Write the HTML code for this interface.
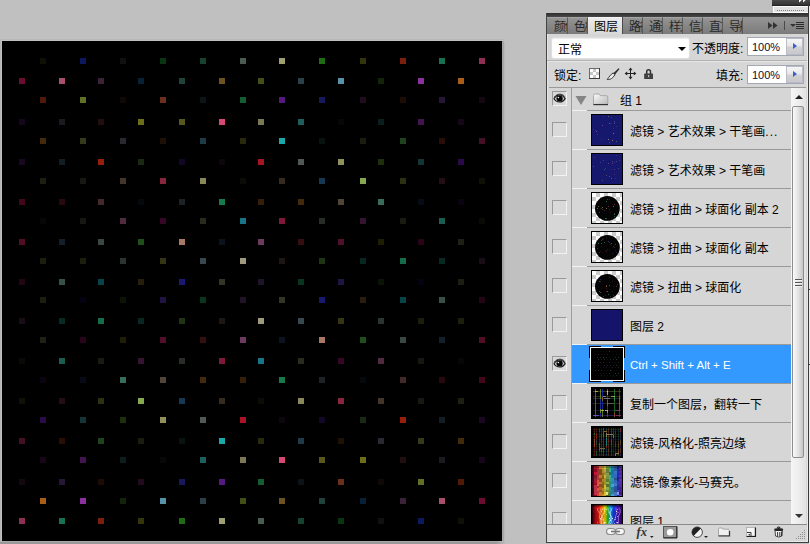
<!DOCTYPE html>
<html lang="zh-CN"><head><meta charset="utf-8"><title>图层</title>
<style>
html,body{margin:0;padding:0;}
html{background:#c0c0c0;}
body{width:810px;height:544px;overflow:hidden;background:#c0c0c0;position:relative;
 font-family:"Liberation Sans","Noto Sans CJK SC","WenQuanYi Zen Hei",sans-serif;font-size:12px;color:#000;}
.abs{position:absolute;}
#canvas{position:absolute;left:2px;top:41px;width:500px;height:500px;background:#000;
 }
#canvas svg{display:block;}
/* dock bits top right */
#dockbar{position:absolute;left:772px;top:0;width:38px;height:5px;background:linear-gradient(#4a4a4a,#333);border-bottom:1px solid #222;}
#dockgrip{position:absolute;left:773px;top:6px;width:35px;height:7px;background:#e0e0e0;box-sizing:border-box;border:1px solid #fbfbfb;border-right:none;}
#rightedge{position:absolute;left:808px;top:5px;width:1px;height:538px;background:#3a3a3a;}
#rightedge2{position:absolute;left:809px;top:6px;width:1px;height:538px;background:#ececec;}
.tick{position:absolute;left:809px;width:1px;height:1px;background:#333;}
/* panel */
#panel{position:absolute;left:546px;top:13px;width:262px;height:530px;background:#d6d6d6;}
#ptop{position:absolute;left:0;top:0;width:262px;height:4px;background:linear-gradient(#2c2c2c,#484848);}
#pleft{position:absolute;left:0;top:0;width:1px;height:530px;background:#444;}
#pleft2{position:absolute;left:1px;top:21px;width:1px;height:507px;background:#e6e6e6;}
#pbottom{position:absolute;left:0;top:529px;width:263px;height:1px;background:#3e3e3e;}
#pbottom2{position:absolute;left:1px;top:528px;width:261px;height:1px;background:#e8e8e8;}
#pright2{position:absolute;left:261px;top:21px;width:1px;height:507px;background:#e8e8e8;}
#tabs{position:absolute;left:1px;top:4px;width:261px;height:17px;background:linear-gradient(#959595,#7b7b7b);overflow:hidden;}
.tab{position:absolute;top:0;height:17px;overflow:hidden;white-space:nowrap;line-height:17px;font-size:12px;
 box-sizing:border-box;border-right:1px solid #5a5a5a;border-top:1px solid #a4a4a4;padding-left:6px;color:#111;
 background:linear-gradient(#939393,#7a7a7a);}
.tab span{display:block;margin-top:1px;letter-spacing:-1.500px;opacity:.82;}
.tab.act span{letter-spacing:0;opacity:1;}
.tab.act{background:linear-gradient(#ececec,#d8d8d8);border-right:none;border-top:1px solid #f4f4f4;padding-left:6px;color:#000;}
#tabsep{position:absolute;top:0;width:1px;height:17px;background:#4a4a4a;}
/* options rows */
#blend{position:absolute;left:6px;top:25px;width:137px;height:20px;background:#fff;border-radius:2px;box-shadow:0 0 0 1px #dedede;border-top:1px solid #ececec;box-sizing:border-box;}
#blend span{position:absolute;left:6px;top:4px;font-size:12px;line-height:14px;}
#blend i{position:absolute;left:126px;top:8px;width:0;height:0;border-left:4px solid transparent;border-right:4px solid transparent;border-top:4px solid #000;}
.lbl{position:absolute;font-size:12px;line-height:14px;white-space:nowrap;}
.num{position:absolute;width:57px;height:19px;background:#b9bcc6;box-sizing:border-box;border:1px solid #a4a8b2;}
.num .in{position:absolute;left:0;top:0;width:38px;height:17px;background:#fff;font-size:11px;line-height:19px;color:#0c0c2c;text-indent:4px;}
.num .bt{position:absolute;left:39px;top:1px;width:15px;height:15px;background:linear-gradient(#f6f6f6,#e6e6e6 48%,#d2d2d4 52%,#c8c8cc);}
.num .bt i{position:absolute;left:6px;top:4px;width:0;height:0;border-top:3.500px solid transparent;border-bottom:3.500px solid transparent;border-left:4px solid #3c5cd0;}
.hline{position:absolute;height:1px;}
/* list */
#list{position:absolute;left:1px;top:74px;width:261px;height:437px;overflow:hidden;}
#vline{position:absolute;left:24px;top:1px;width:1px;height:436px;background:#9c9c9c;}
.eye{position:absolute;left:5px;width:15px;height:15px;box-sizing:border-box;border:1px solid;border-color:#9a9a9a #f2f2f2 #f2f2f2 #9a9a9a;background:#d9d9d9;}
.row{position:absolute;left:25px;width:219px;height:39px;}
.row .s1{position:absolute;left:0;top:0;width:15px;height:1px;background:#f2f2f2;}
.row .s2{position:absolute;left:15px;top:0;width:204px;height:1px;background:#9a9a9a;}
.row .th{position:absolute;left:19px;top:4px;width:32px;height:32px;background:#000;overflow:hidden;}
.row .th svg{display:block;}
.row .nm{position:absolute;left:58px;top:15px;font-size:12px;line-height:14px;white-space:nowrap;color:#000;}
.row.sel{background:#3399ff;}
.row.sel .nm{color:#fff;}
/* scrollbar */
#sb{position:absolute;left:245px;top:75px;width:15px;height:436px;background:linear-gradient(90deg,#f6f6f6,#ededed 50%,#e2e2e2);}
#thumb{position:absolute;left:1px;top:18px;width:12px;height:352px;box-sizing:border-box;border:1px solid #8e8e8e;border-radius:2px;
 background:linear-gradient(90deg,#fafafa,#e6e6e6 45%,#c6c6c6);}
.grip{position:absolute;left:2px;width:7px;height:1px;background:#555;box-shadow:0 1px 0 #f4f4f4;}
.arr{position:absolute;left:4px;width:0;height:0;border-left:4px solid transparent;border-right:4px solid transparent;}
/* bottom toolbar */
#tb{position:absolute;left:1px;top:511px;width:261px;height:17px;background:#d6d6d6;border-top:1px solid #8a8a8a;box-sizing:border-box;}
#tb svg{position:absolute;top:0;left:0;}
.row.sel .bg{position:absolute;left:0;top:1px;width:219px;height:38px;background:#3399ff;}
.row.sel{background:none;}
.row.sel .nm{font-size:11.500px;top:14px;}
.dd{letter-spacing:1px;}
.sh{position:absolute;}

</style></head>
<body>
<div class="sh" style="left:0;top:39px;width:504px;height:1px;background:#b7b7b7"></div>
<div class="sh" style="left:0;top:40px;width:1px;height:504px;background:#b5b5b5"></div>
<div class="sh" style="left:502px;top:41px;width:2px;height:500px;background:#a6a6a6"></div>
<div class="sh" style="left:504px;top:42px;width:1px;height:498px;background:#b8b8b8"></div>
<div class="sh" style="left:1px;top:541px;width:504px;height:1px;background:linear-gradient(90deg,#a8a8a8 0,#a8a8a8 496px,#bcbcbc 504px)"></div>
<div class="sh" style="left:0;top:542px;width:506px;height:2px;background:linear-gradient(90deg,#999 0,#999 496px,#c0c0c0 506px)"></div>
<div id="canvas"><svg width="500" height="500" viewBox="0 0 500 500" shape-rendering="crispEdges"><rect width="500" height="500" fill="#000"/><rect x="38" y="17" width="6" height="6" fill="#0d1105"/><rect x="78" y="17" width="6" height="6" fill="#0e185d"/><rect x="118" y="17" width="6" height="6" fill="#101011"/><rect x="158" y="17" width="6" height="6" fill="#0a3512"/><rect x="198" y="17" width="6" height="6" fill="#16422f"/><rect x="238" y="17" width="6" height="6" fill="#495c4f"/><rect x="277" y="17" width="6" height="6" fill="#9f9f71"/><rect x="317" y="17" width="6" height="6" fill="#206c15"/><rect x="358" y="17" width="6" height="6" fill="#35350b"/><rect x="398" y="17" width="6" height="6" fill="#7a1f0c"/><rect x="437" y="17" width="6" height="6" fill="#197153"/><rect x="477" y="17" width="6" height="6" fill="#902f55"/><rect x="17" y="37" width="6" height="6" fill="#6c0c32"/><rect x="57" y="37" width="6" height="6" fill="#a8506b"/><rect x="96" y="37" width="6" height="6" fill="#3a2336"/><rect x="136" y="37" width="6" height="6" fill="#082137"/><rect x="177" y="37" width="6" height="6" fill="#1f423b"/><rect x="217" y="37" width="6" height="6" fill="#6c531f"/><rect x="256" y="37" width="6" height="6" fill="#435015"/><rect x="296" y="37" width="6" height="6" fill="#2b4147"/><rect x="336" y="37" width="6" height="6" fill="#5793a8"/><rect x="376" y="37" width="6" height="6" fill="#13240b"/><rect x="416" y="37" width="6" height="6" fill="#8b319f"/><rect x="456" y="37" width="6" height="6" fill="#a85e17"/><rect x="38" y="56" width="6" height="6" fill="#501b06"/><rect x="78" y="56" width="6" height="6" fill="#607125"/><rect x="118" y="56" width="6" height="6" fill="#100806"/><rect x="158" y="56" width="6" height="6" fill="#6c2f1c"/><rect x="198" y="56" width="6" height="6" fill="#0b1316"/><rect x="238" y="56" width="6" height="6" fill="#145d31"/><rect x="277" y="56" width="6" height="6" fill="#551980"/><rect x="317" y="56" width="6" height="6" fill="#18185d"/><rect x="358" y="56" width="6" height="6" fill="#200c1c"/><rect x="398" y="56" width="6" height="6" fill="#1d0b05"/><rect x="437" y="56" width="6" height="6" fill="#251735"/><rect x="477" y="56" width="6" height="6" fill="#130810"/><rect x="17" y="78" width="6" height="6" fill="#16061b"/><rect x="57" y="78" width="6" height="6" fill="#1c1921"/><rect x="96" y="78" width="6" height="6" fill="#210e0e"/><rect x="136" y="78" width="6" height="6" fill="#6c6e19"/><rect x="177" y="78" width="6" height="6" fill="#58581e"/><rect x="217" y="78" width="6" height="6" fill="#d64972"/><rect x="256" y="78" width="6" height="6" fill="#7a7954"/><rect x="296" y="78" width="6" height="6" fill="#205d5d"/><rect x="336" y="78" width="6" height="6" fill="#060805"/><rect x="376" y="78" width="6" height="6" fill="#0b1d1d"/><rect x="416" y="78" width="6" height="6" fill="#431550"/><rect x="456" y="78" width="6" height="6" fill="#160618"/><rect x="38" y="97" width="6" height="6" fill="#422a0b"/><rect x="78" y="97" width="6" height="6" fill="#363a1a"/><rect x="118" y="97" width="6" height="6" fill="#292931"/><rect x="158" y="97" width="6" height="6" fill="#1d1005"/><rect x="198" y="97" width="6" height="6" fill="#1f3b47"/><rect x="238" y="97" width="6" height="6" fill="#292a0b"/><rect x="277" y="97" width="6" height="6" fill="#1aa8a8"/><rect x="317" y="97" width="6" height="6" fill="#081310"/><rect x="358" y="97" width="6" height="6" fill="#1b1b10"/><rect x="398" y="97" width="6" height="6" fill="#1f421f"/><rect x="437" y="97" width="6" height="6" fill="#290e05"/><rect x="477" y="97" width="6" height="6" fill="#421126"/><rect x="17" y="118" width="6" height="6" fill="#1a0721"/><rect x="57" y="118" width="6" height="6" fill="#121d24"/><rect x="96" y="118" width="6" height="6" fill="#971d0d"/><rect x="136" y="118" width="6" height="6" fill="#192913"/><rect x="177" y="118" width="6" height="6" fill="#130727"/><rect x="217" y="118" width="6" height="6" fill="#0d060d"/><rect x="256" y="118" width="6" height="6" fill="#a81424"/><rect x="296" y="118" width="6" height="6" fill="#515858"/><rect x="336" y="118" width="6" height="6" fill="#90905b"/><rect x="376" y="118" width="6" height="6" fill="#1e2f0b"/><rect x="416" y="118" width="6" height="6" fill="#143535"/><rect x="456" y="118" width="6" height="6" fill="#2b0b47"/><rect x="38" y="137" width="6" height="6" fill="#1e1e13"/><rect x="78" y="137" width="6" height="6" fill="#181812"/><rect x="118" y="137" width="6" height="6" fill="#42362a"/><rect x="158" y="137" width="6" height="6" fill="#882640"/><rect x="198" y="137" width="6" height="6" fill="#88885a"/><rect x="238" y="137" width="6" height="6" fill="#0a0d05"/><rect x="277" y="137" width="6" height="6" fill="#352b1e"/><rect x="317" y="137" width="6" height="6" fill="#183750"/><rect x="358" y="137" width="6" height="6" fill="#86a850"/><rect x="398" y="137" width="6" height="6" fill="#2b3111"/><rect x="437" y="137" width="6" height="6" fill="#240e16"/><rect x="477" y="137" width="6" height="6" fill="#101006"/><rect x="17" y="158" width="6" height="6" fill="#42081a"/><rect x="57" y="158" width="6" height="6" fill="#29080e"/><rect x="96" y="158" width="6" height="6" fill="#422a2a"/><rect x="136" y="158" width="6" height="6" fill="#06090c"/><rect x="177" y="158" width="6" height="6" fill="#1d2227"/><rect x="217" y="158" width="6" height="6" fill="#167a4c"/><rect x="256" y="158" width="6" height="6" fill="#351f08"/><rect x="296" y="158" width="6" height="6" fill="#422a0b"/><rect x="336" y="158" width="6" height="6" fill="#504536"/><rect x="376" y="158" width="6" height="6" fill="#3a6c5e"/><rect x="416" y="158" width="6" height="6" fill="#060b16"/><rect x="456" y="158" width="6" height="6" fill="#0a0411"/><rect x="38" y="177" width="6" height="6" fill="#080509"/><rect x="78" y="177" width="6" height="6" fill="#161711"/><rect x="118" y="177" width="6" height="6" fill="#502b3f"/><rect x="158" y="177" width="6" height="6" fill="#350725"/><rect x="198" y="177" width="6" height="6" fill="#2a2a1f"/><rect x="238" y="177" width="6" height="6" fill="#197488"/><rect x="277" y="177" width="6" height="6" fill="#801939"/><rect x="317" y="177" width="6" height="6" fill="#292d28"/><rect x="358" y="177" width="6" height="6" fill="#351431"/><rect x="398" y="177" width="6" height="6" fill="#191b13"/><rect x="437" y="177" width="6" height="6" fill="#1b5d50"/><rect x="477" y="177" width="6" height="6" fill="#080a06"/><rect x="17" y="198" width="6" height="6" fill="#500f27"/><rect x="57" y="198" width="6" height="6" fill="#131f2a"/><rect x="96" y="198" width="6" height="6" fill="#3b4741"/><rect x="136" y="198" width="6" height="6" fill="#1f501b"/><rect x="177" y="198" width="6" height="6" fill="#a87864"/><rect x="217" y="198" width="6" height="6" fill="#0d131e"/><rect x="256" y="198" width="6" height="6" fill="#6c3a5f"/><rect x="296" y="198" width="6" height="6" fill="#350e11"/><rect x="336" y="198" width="6" height="6" fill="#500f2a"/><rect x="376" y="198" width="6" height="6" fill="#1e1e05"/><rect x="416" y="198" width="6" height="6" fill="#290419"/><rect x="456" y="198" width="6" height="6" fill="#1e2116"/><rect x="38" y="217" width="6" height="6" fill="#1e1e0d"/><rect x="78" y="217" width="6" height="6" fill="#1d1d0b"/><rect x="118" y="217" width="6" height="6" fill="#2b342e"/><rect x="158" y="217" width="6" height="6" fill="#353514"/><rect x="198" y="217" width="6" height="6" fill="#37484e"/><rect x="238" y="217" width="6" height="6" fill="#9f997e"/><rect x="277" y="217" width="6" height="6" fill="#1d1612"/><rect x="317" y="217" width="6" height="6" fill="#1e3514"/><rect x="358" y="217" width="6" height="6" fill="#082722"/><rect x="398" y="217" width="6" height="6" fill="#156c48"/><rect x="437" y="217" width="6" height="6" fill="#082a25"/><rect x="477" y="217" width="6" height="6" fill="#180d16"/><rect x="17" y="238" width="6" height="6" fill="#240513"/><rect x="57" y="238" width="6" height="6" fill="#375048"/><rect x="96" y="238" width="6" height="6" fill="#084347"/><rect x="136" y="238" width="6" height="6" fill="#291d0b"/><rect x="177" y="238" width="6" height="6" fill="#191971"/><rect x="217" y="238" width="6" height="6" fill="#353525"/><rect x="256" y="238" width="6" height="6" fill="#1f1327"/><rect x="296" y="238" width="6" height="6" fill="#08351d"/><rect x="336" y="238" width="6" height="6" fill="#201442"/><rect x="376" y="238" width="6" height="6" fill="#0a1305"/><rect x="416" y="238" width="6" height="6" fill="#040211"/><rect x="456" y="238" width="6" height="6" fill="#1e1e10"/><rect x="38" y="256" width="6" height="6" fill="#1e1e10"/><rect x="78" y="256" width="6" height="6" fill="#040211"/><rect x="118" y="256" width="6" height="6" fill="#0a1305"/><rect x="158" y="256" width="6" height="6" fill="#201442"/><rect x="198" y="256" width="6" height="6" fill="#08351d"/><rect x="238" y="256" width="6" height="6" fill="#1f1327"/><rect x="277" y="256" width="6" height="6" fill="#353525"/><rect x="317" y="256" width="6" height="6" fill="#191971"/><rect x="358" y="256" width="6" height="6" fill="#291d0b"/><rect x="398" y="256" width="6" height="6" fill="#084347"/><rect x="437" y="256" width="6" height="6" fill="#375048"/><rect x="477" y="256" width="6" height="6" fill="#240513"/><rect x="17" y="277" width="6" height="6" fill="#180d16"/><rect x="57" y="277" width="6" height="6" fill="#082a25"/><rect x="96" y="277" width="6" height="6" fill="#156c48"/><rect x="136" y="277" width="6" height="6" fill="#082722"/><rect x="177" y="277" width="6" height="6" fill="#1e3514"/><rect x="217" y="277" width="6" height="6" fill="#1d1612"/><rect x="256" y="277" width="6" height="6" fill="#9f997e"/><rect x="296" y="277" width="6" height="6" fill="#37484e"/><rect x="336" y="277" width="6" height="6" fill="#353514"/><rect x="376" y="277" width="6" height="6" fill="#2b342e"/><rect x="416" y="277" width="6" height="6" fill="#1d1d0b"/><rect x="456" y="277" width="6" height="6" fill="#1e1e0d"/><rect x="38" y="296" width="6" height="6" fill="#1e2116"/><rect x="78" y="296" width="6" height="6" fill="#290419"/><rect x="118" y="296" width="6" height="6" fill="#1e1e05"/><rect x="158" y="296" width="6" height="6" fill="#500f2a"/><rect x="198" y="296" width="6" height="6" fill="#350e11"/><rect x="238" y="296" width="6" height="6" fill="#6c3a5f"/><rect x="277" y="296" width="6" height="6" fill="#0d131e"/><rect x="317" y="296" width="6" height="6" fill="#a87864"/><rect x="358" y="296" width="6" height="6" fill="#1f501b"/><rect x="398" y="296" width="6" height="6" fill="#3b4741"/><rect x="437" y="296" width="6" height="6" fill="#131f2a"/><rect x="477" y="296" width="6" height="6" fill="#500f27"/><rect x="17" y="317" width="6" height="6" fill="#080a06"/><rect x="57" y="317" width="6" height="6" fill="#1b5d50"/><rect x="96" y="317" width="6" height="6" fill="#191b13"/><rect x="136" y="317" width="6" height="6" fill="#351431"/><rect x="177" y="317" width="6" height="6" fill="#292d28"/><rect x="217" y="317" width="6" height="6" fill="#801939"/><rect x="256" y="317" width="6" height="6" fill="#197488"/><rect x="296" y="317" width="6" height="6" fill="#2a2a1f"/><rect x="336" y="317" width="6" height="6" fill="#350725"/><rect x="376" y="317" width="6" height="6" fill="#502b3f"/><rect x="416" y="317" width="6" height="6" fill="#161711"/><rect x="456" y="317" width="6" height="6" fill="#080509"/><rect x="38" y="336" width="6" height="6" fill="#0a0411"/><rect x="78" y="336" width="6" height="6" fill="#060b16"/><rect x="118" y="336" width="6" height="6" fill="#3a6c5e"/><rect x="158" y="336" width="6" height="6" fill="#504536"/><rect x="198" y="336" width="6" height="6" fill="#422a0b"/><rect x="238" y="336" width="6" height="6" fill="#351f08"/><rect x="277" y="336" width="6" height="6" fill="#167a4c"/><rect x="317" y="336" width="6" height="6" fill="#1d2227"/><rect x="358" y="336" width="6" height="6" fill="#06090c"/><rect x="398" y="336" width="6" height="6" fill="#422a2a"/><rect x="437" y="336" width="6" height="6" fill="#29080e"/><rect x="477" y="336" width="6" height="6" fill="#42081a"/><rect x="17" y="357" width="6" height="6" fill="#101006"/><rect x="57" y="357" width="6" height="6" fill="#240e16"/><rect x="96" y="357" width="6" height="6" fill="#2b3111"/><rect x="136" y="357" width="6" height="6" fill="#86a850"/><rect x="177" y="357" width="6" height="6" fill="#183750"/><rect x="217" y="357" width="6" height="6" fill="#352b1e"/><rect x="256" y="357" width="6" height="6" fill="#0a0d05"/><rect x="296" y="357" width="6" height="6" fill="#88885a"/><rect x="336" y="357" width="6" height="6" fill="#882640"/><rect x="376" y="357" width="6" height="6" fill="#42362a"/><rect x="416" y="357" width="6" height="6" fill="#181812"/><rect x="456" y="357" width="6" height="6" fill="#1e1e13"/><rect x="38" y="376" width="6" height="6" fill="#2b0b47"/><rect x="78" y="376" width="6" height="6" fill="#143535"/><rect x="118" y="376" width="6" height="6" fill="#1e2f0b"/><rect x="158" y="376" width="6" height="6" fill="#90905b"/><rect x="198" y="376" width="6" height="6" fill="#515858"/><rect x="238" y="376" width="6" height="6" fill="#a81424"/><rect x="277" y="376" width="6" height="6" fill="#0d060d"/><rect x="317" y="376" width="6" height="6" fill="#130727"/><rect x="358" y="376" width="6" height="6" fill="#192913"/><rect x="398" y="376" width="6" height="6" fill="#971d0d"/><rect x="437" y="376" width="6" height="6" fill="#121d24"/><rect x="477" y="376" width="6" height="6" fill="#1a0721"/><rect x="17" y="397" width="6" height="6" fill="#421126"/><rect x="57" y="397" width="6" height="6" fill="#290e05"/><rect x="96" y="397" width="6" height="6" fill="#1f421f"/><rect x="136" y="397" width="6" height="6" fill="#1b1b10"/><rect x="177" y="397" width="6" height="6" fill="#081310"/><rect x="217" y="397" width="6" height="6" fill="#1aa8a8"/><rect x="256" y="397" width="6" height="6" fill="#292a0b"/><rect x="296" y="397" width="6" height="6" fill="#1f3b47"/><rect x="336" y="397" width="6" height="6" fill="#1d1005"/><rect x="376" y="397" width="6" height="6" fill="#292931"/><rect x="416" y="397" width="6" height="6" fill="#363a1a"/><rect x="456" y="397" width="6" height="6" fill="#422a0b"/><rect x="38" y="416" width="6" height="6" fill="#160618"/><rect x="78" y="416" width="6" height="6" fill="#431550"/><rect x="118" y="416" width="6" height="6" fill="#0b1d1d"/><rect x="158" y="416" width="6" height="6" fill="#060805"/><rect x="198" y="416" width="6" height="6" fill="#205d5d"/><rect x="238" y="416" width="6" height="6" fill="#7a7954"/><rect x="277" y="416" width="6" height="6" fill="#d64972"/><rect x="317" y="416" width="6" height="6" fill="#58581e"/><rect x="358" y="416" width="6" height="6" fill="#6c6e19"/><rect x="398" y="416" width="6" height="6" fill="#210e0e"/><rect x="437" y="416" width="6" height="6" fill="#1c1921"/><rect x="477" y="416" width="6" height="6" fill="#16061b"/><rect x="17" y="438" width="6" height="6" fill="#130810"/><rect x="57" y="438" width="6" height="6" fill="#251735"/><rect x="96" y="438" width="6" height="6" fill="#1d0b05"/><rect x="136" y="438" width="6" height="6" fill="#200c1c"/><rect x="177" y="438" width="6" height="6" fill="#18185d"/><rect x="217" y="438" width="6" height="6" fill="#551980"/><rect x="256" y="438" width="6" height="6" fill="#145d31"/><rect x="296" y="438" width="6" height="6" fill="#0b1316"/><rect x="336" y="438" width="6" height="6" fill="#6c2f1c"/><rect x="376" y="438" width="6" height="6" fill="#100806"/><rect x="416" y="438" width="6" height="6" fill="#607125"/><rect x="456" y="438" width="6" height="6" fill="#501b06"/><rect x="38" y="457" width="6" height="6" fill="#a85e17"/><rect x="78" y="457" width="6" height="6" fill="#8b319f"/><rect x="118" y="457" width="6" height="6" fill="#13240b"/><rect x="158" y="457" width="6" height="6" fill="#5793a8"/><rect x="198" y="457" width="6" height="6" fill="#2b4147"/><rect x="238" y="457" width="6" height="6" fill="#435015"/><rect x="277" y="457" width="6" height="6" fill="#6c531f"/><rect x="317" y="457" width="6" height="6" fill="#1f423b"/><rect x="358" y="457" width="6" height="6" fill="#082137"/><rect x="398" y="457" width="6" height="6" fill="#3a2336"/><rect x="437" y="457" width="6" height="6" fill="#a8506b"/><rect x="477" y="457" width="6" height="6" fill="#6c0c32"/><rect x="17" y="477" width="6" height="6" fill="#902f55"/><rect x="57" y="477" width="6" height="6" fill="#197153"/><rect x="96" y="477" width="6" height="6" fill="#7a1f0c"/><rect x="136" y="477" width="6" height="6" fill="#35350b"/><rect x="177" y="477" width="6" height="6" fill="#206c15"/><rect x="217" y="477" width="6" height="6" fill="#9f9f71"/><rect x="256" y="477" width="6" height="6" fill="#495c4f"/><rect x="296" y="477" width="6" height="6" fill="#16422f"/><rect x="336" y="477" width="6" height="6" fill="#0a3512"/><rect x="376" y="477" width="6" height="6" fill="#101011"/><rect x="416" y="477" width="6" height="6" fill="#0e185d"/><rect x="456" y="477" width="6" height="6" fill="#0d1105"/></svg></div>
<div id="dockbar"><svg class="abs" style="left:26px;top:0" width="10" height="4" viewBox="0 0 10 4"><path d="M1 0h2.800l-2.200 2.200h-.6zM5 0h2.700l-2.100 2.200h-.6z" fill="#f4f4f4"/></svg></div>
<div id="dockgrip"><svg class="abs" style="left:3px;top:2px" width="28" height="4" viewBox="0 0 28 4" shape-rendering="crispEdges"><path d="M0 1.500h1M2 1.500h1M4 1.500h1M6 1.500h1M8 1.500h1M10 1.500h1M12 1.500h1M14 1.500h1M16 1.500h1M18 1.500h1M20 1.500h1M22 1.500h1M24 1.500h1M26 1.500h1" stroke="#808080" stroke-width="1"/></svg></div>
<div id="rightedge"></div><div id="rightedge2"></div><div class="tick" style="top:289px"></div><div class="tick" style="top:364px"></div>
<div id="panel">
 <div id="ptop"></div>
 <div id="tabs">
  <div class="tab" style="left:0;width:21px;padding-left:7px"><span>颜色</span></div>
  <div class="tab" style="left:21px;width:20px"><span>色板</span></div>
  <div class="tab act" style="left:41px;width:34px"><span>图层</span></div>
  <div id="tabsep" style="left:75px"></div>
  <div class="tab" style="left:76px;width:20px"><span>路径</span></div>
  <div class="tab" style="left:96px;width:20px"><span>通道</span></div>
  <div class="tab" style="left:116px;width:20px"><span>样式</span></div>
  <div class="tab" style="left:136px;width:20px"><span>信息</span></div>
  <div class="tab" style="left:156px;width:20px"><span>直方图</span></div>
  <div class="tab" style="left:176px;width:20px"><span>导航器</span></div>
  <svg class="abs" style="left:218px;top:3px" width="42" height="12" viewBox="0 0 42 12">
   <path d="M3 2l4.6 3.5L3 9zM8 2l4.6 3.5L8 9z" fill="#333"/>
   <path d="M19.5 1v9" stroke="#4a4a4a" stroke-width="1"/>
   <path d="M25 4h6l-3 3z" fill="#333"/>
   <path d="M31 2.5h8M31 4.5h8M31 6.5h8M31 8.5h8" stroke="#2c2c2c" stroke-width="1" shape-rendering="crispEdges"/>
  </svg>
 </div>
 <div id="pleft"></div><div id="pleft2"></div>
 <div id="blend"><span>正常</span><i></i></div>
 <div class="lbl" style="left:146px;top:29px">不透明度:</div>
 <div class="num" style="left:201px;top:24px"><div class="in">100%</div><div class="bt"><i></i></div></div>
 <div class="hline" style="left:1px;top:47px;width:261px;background:#b2b2b2"></div>
 <div class="hline" style="left:1px;top:48px;width:261px;background:#e6e6e6"></div>
 <div class="lbl" style="left:8px;top:56px">锁定:</div>
 <svg class="abs" style="left:42px;top:54px" width="70" height="14" viewBox="0 0 70 14">
  <g shape-rendering="crispEdges"><rect x="1.500" y="1.500" width="10" height="10" fill="#fff" stroke="#6a6a6a" stroke-width="1"/>
  <path d="M5 2h3v3h-3zM2 5h3v3h-3zM8 5h3v3h-3zM5 8h3v3h-3z" fill="#c8c8c8"/><path d="M1 11.500h10.500v-10.500" fill="none" stroke="#3c3c3c" stroke-width="1"/></g>
  <path d="M19.200 12.500c2.200.1 4.200-.5 5.600-2l2.300-2.900-2-1.700-2.700 2.300c-1.500 1.300-1.900 2.900-3.200 4.300z" fill="#ececec" stroke="#3a3a3a" stroke-width="1"/>
  <path d="M25.200 6.400l5.300-5.200 1 .9-4.700 5.700z" fill="#2c2c2c"/>
  <path d="M42.500 1v11M37 6.500h11" stroke="#222" stroke-width="1" fill="none"/>
  <path d="M42.500.6l2 2.600h-4zM42.500 12.400l2-2.600h-4zM36.600 6.500l2.600-2v4zM48.400 6.500l-2.600-2v4z" fill="#222"/>
  <path d="M58.700 7v-2.300a1.900 1.900 0 0 1 3.800 0v2.300" fill="none" stroke="#333" stroke-width="1.500"/>
  <rect x="56.200" y="6.600" width="8.800" height="5.400" rx=".6" fill="#3a3a3a"/>
  <path d="M56.200 8.500h8.800M56.200 10.300h8.800" stroke="#555" stroke-width=".5"/>
  <rect x="60" y="8" width="1.200" height="2.200" fill="#bbb"/>
 </svg>
 <div class="lbl" style="left:170px;top:56px">填充:</div>
 <div class="num" style="left:201px;top:52px"><div class="in">100%</div><div class="bt"><i></i></div></div>
 <div class="hline" style="left:3px;top:74px;width:257px;background:#9a9a9a"></div>
 <div id="list">
  <div id="vline"></div>
  <!-- group row -->
  <div class="eye" style="top:4px"><svg width="13" height="13" viewBox="0 0 13 13" style="display:block"><path d="M1 6.800C2.600 4 4.600 3 6.600 3s4 1 5.600 3.600C10.800 9 8.800 10 6.600 10S2.400 9.200 1 6.800z" fill="#c8c8c8" stroke="#1a1a1a" stroke-width="1.100"/><path d="M1.200 5.200C3 3 5 2.200 6.800 2.200s3.600.600 5 2.400" fill="none" stroke="#2a2a2a" stroke-width="1"/><ellipse cx="6.600" cy="6.500" rx="3.100" ry="2.900" fill="#080808"/><circle cx="5.400" cy="5.500" r=".8" fill="#fff"/></svg></div>
  <svg class="abs" style="left:28px;top:6px" width="36" height="14" viewBox="0 0 36 14">
   <path d="M0.500 3h11l-5.500 9z" fill="#858585"/>
   <path d="M18.500 2.600q0-1.600 1.600-1.600h3.400q1 0 1.500 1l.4.700h6q1.400 0 1.400 1.400v7.300h-14.300z" fill="url(#fg)" stroke="#9a9a9a" stroke-width=".8"/>
   <path d="M18.400 11.600h14.600" stroke="#333" stroke-width="1.200"/>
   <defs><linearGradient id="fg" x1="0" y1="0" x2="1" y2="1"><stop offset="0" stop-color="#fbfbfb"/><stop offset="1" stop-color="#b8b8b8"/></linearGradient></defs>
  </svg>
  <div class="lbl" style="left:73px;top:7px">组 1</div>
  <div class="eye" style="top:35px"></div>
  <div class="row" style="top:23px"><div class="s1"></div><div class="s2"></div><div class="th"><svg width="32" height="32" viewBox="0 0 32 32" shape-rendering="crispEdges"><rect width="32" height="32" fill="#000"/><rect x="1" y="1" width="30" height="30" fill="#15186c"/><rect x="6" y="20" width="1" height="1" fill="#b04060" opacity="0.45"/><rect x="5" y="17" width="1" height="1" fill="#c06090" opacity="0.6"/><rect x="22" y="14" width="1" height="1" fill="#8080c0" opacity="0.2"/><rect x="17" y="2" width="1" height="1" fill="#909040" opacity="0.6"/><rect x="21" y="26" width="1" height="1" fill="#c8b070" opacity="0.6"/><rect x="10" y="25" width="1" height="1" fill="#8080c0" opacity="0.2"/><rect x="12" y="2" width="1" height="1" fill="#c8b070" opacity="0.2"/><rect x="22" y="19" width="1" height="1" fill="#c8b070" opacity="0.6"/><rect x="23" y="8" width="1" height="1" fill="#909040" opacity="0.2"/><rect x="18" y="9" width="1" height="1" fill="#c06090" opacity="0.6"/><rect x="19" y="9" width="1" height="1" fill="#5090b0" opacity="0.3"/><rect x="23" y="9" width="1" height="1" fill="#c06090" opacity="0.45"/><rect x="2" y="15" width="1" height="1" fill="#b04060" opacity="0.3"/><rect x="22" y="25" width="1" height="1" fill="#a05030" opacity="0.2"/><rect x="25" y="12" width="1" height="1" fill="#909040" opacity="0.3"/><rect x="11" y="11" width="1" height="1" fill="#c06090" opacity="0.6"/><rect x="20" y="3" width="1" height="1" fill="#c06090" opacity="0.3"/><rect x="25" y="27" width="1" height="1" fill="#909040" opacity="0.6"/><rect x="23" y="7" width="1" height="1" fill="#5090b0" opacity="0.45"/><rect x="4" y="16" width="1" height="1" fill="#b04060" opacity="0.3"/><rect x="18" y="28" width="1" height="1" fill="#909040" opacity="0.45"/><rect x="17" y="25" width="1" height="1" fill="#c8b070" opacity="0.6"/></svg></div><div class="nm">滤镜 &gt; 艺术效果 &gt; 干笔画<span class="dd">...</span></div></div>
  <div class="eye" style="top:74px"></div>
  <div class="row" style="top:62px"><div class="s1"></div><div class="s2"></div><div class="th"><svg width="32" height="32" viewBox="0 0 32 32" shape-rendering="crispEdges"><rect width="32" height="32" fill="#000"/><rect x="1" y="1" width="30" height="30" fill="#15186c"/><rect x="3" y="4" width="1" height="1" fill="#b04060" opacity="0.45"/><rect x="28" y="7" width="1" height="1" fill="#a05030" opacity="0.45"/><rect x="21" y="8" width="1" height="1" fill="#c8b070" opacity="0.3"/><rect x="15" y="22" width="1" height="1" fill="#909040" opacity="0.45"/><rect x="19" y="16" width="1" height="1" fill="#a05030" opacity="0.2"/><rect x="2" y="13" width="1" height="1" fill="#c06090" opacity="0.45"/><rect x="14" y="15" width="1" height="1" fill="#30a070" opacity="0.3"/><rect x="9" y="9" width="1" height="1" fill="#c8b070" opacity="0.3"/><rect x="12" y="7" width="1" height="1" fill="#30a070" opacity="0.45"/><rect x="18" y="23" width="1" height="1" fill="#30a070" opacity="0.6"/><rect x="27" y="15" width="1" height="1" fill="#5090b0" opacity="0.45"/><rect x="13" y="16" width="1" height="1" fill="#30a070" opacity="0.6"/><rect x="24" y="25" width="1" height="1" fill="#c06090" opacity="0.3"/><rect x="17" y="10" width="1" height="1" fill="#c06090" opacity="0.45"/><rect x="23" y="16" width="1" height="1" fill="#c06090" opacity="0.45"/><rect x="20" y="25" width="1" height="1" fill="#c06090" opacity="0.6"/><rect x="23" y="9" width="1" height="1" fill="#5090b0" opacity="0.3"/><rect x="21" y="10" width="1" height="1" fill="#c06090" opacity="0.45"/><rect x="11" y="27" width="1" height="1" fill="#909040" opacity="0.45"/><rect x="25" y="8" width="1" height="1" fill="#c06090" opacity="0.45"/><rect x="23" y="21" width="1" height="1" fill="#b04060" opacity="0.45"/><rect x="25" y="2" width="1" height="1" fill="#8080c0" opacity="0.2"/></svg></div><div class="nm">滤镜 &gt; 艺术效果 &gt; 干笔画</div></div>
  <div class="eye" style="top:113px"></div>
  <div class="row" style="top:101px"><div class="s1"></div><div class="s2"></div><div class="th"><svg width="32" height="32" viewBox="0 0 32 32" shape-rendering="crispEdges"><rect width="32" height="32" fill="#000"/><rect x="1" y="1" width="30" height="30" fill="#fff"/><path d="M5 1h4v4h-4zM13 1h4v4h-4zM21 1h4v4h-4zM29 1h2v4h-2zM1 5h4v4h-4zM9 5h4v4h-4zM17 5h4v4h-4zM25 5h4v4h-4zM5 9h4v4h-4zM13 9h4v4h-4zM21 9h4v4h-4zM29 9h2v4h-2zM1 13h4v4h-4zM9 13h4v4h-4zM17 13h4v4h-4zM25 13h4v4h-4zM5 17h4v4h-4zM13 17h4v4h-4zM21 17h4v4h-4zM29 17h2v4h-2zM1 21h4v4h-4zM9 21h4v4h-4zM17 21h4v4h-4zM25 21h4v4h-4zM5 25h4v4h-4zM13 25h4v4h-4zM21 25h4v4h-4zM29 25h2v4h-2zM1 29h4v2h-4zM9 29h4v2h-4zM17 29h4v2h-4zM25 29h4v2h-4z" fill="#ccc"/><circle cx="16.400" cy="16.400" r="12.400" fill="#040404" shape-rendering="auto"/><rect x="23" y="24" width="1" height="1" fill="#30b0c0" opacity="0.45"/><rect x="23" y="22" width="1" height="1" fill="#40c0a0" opacity="0.6"/><rect x="17" y="14" width="1" height="1" fill="#c03040" opacity="0.6"/><rect x="8" y="20" width="1" height="1" fill="#c03040" opacity="0.6"/><rect x="15" y="26" width="1" height="1" fill="#30b0c0" opacity="0.45"/><rect x="18" y="17" width="1" height="1" fill="#a04080" opacity="0.2"/><rect x="22" y="14" width="1" height="1" fill="#b0a060" opacity="0.6"/><rect x="15" y="9" width="1" height="1" fill="#40c0a0" opacity="0.6"/><rect x="11" y="15" width="1" height="1" fill="#b0a060" opacity="0.6"/><rect x="26" y="13" width="1" height="1" fill="#806040" opacity="0.2"/><rect x="20" y="26" width="1" height="1" fill="#3040c0" opacity="0.2"/><rect x="16" y="7" width="1" height="1" fill="#a04080" opacity="0.6"/><rect x="6" y="16" width="1" height="1" fill="#b0a060" opacity="0.45"/><rect x="14" y="26" width="1" height="1" fill="#40c0a0" opacity="0.6"/><rect x="15" y="16" width="1" height="1" fill="#b0a060" opacity="0.6"/><rect x="13" y="18" width="1" height="1" fill="#a04080" opacity="0.45"/><rect x="23" y="21" width="1" height="1" fill="#30b0c0" opacity="0.3"/><rect x="10" y="16" width="1" height="1" fill="#40c0a0" opacity="0.2"/><rect x="11" y="17" width="1" height="1" fill="#806040" opacity="0.3"/><rect x="19" y="20" width="1" height="1" fill="#c03040" opacity="0.3"/><rect x="7" y="14" width="1" height="1" fill="#b0a060" opacity="0.6"/><rect x="6" y="16" width="1" height="1" fill="#30a060" opacity="0.6"/><rect x="23" y="12" width="1" height="1" fill="#c03040" opacity="0.6"/><rect x="18" y="7" width="1" height="1" fill="#a04080" opacity="0.3"/><rect x="9" y="16" width="1" height="1" fill="#806040" opacity="0.2"/><rect x="11" y="17" width="1" height="1" fill="#a04080" opacity="0.3"/></svg></div><div class="nm">滤镜 &gt; 扭曲 &gt; 球面化 副本 2</div></div>
  <div class="eye" style="top:152px"></div>
  <div class="row" style="top:140px"><div class="s1"></div><div class="s2"></div><div class="th"><svg width="32" height="32" viewBox="0 0 32 32" shape-rendering="crispEdges"><rect width="32" height="32" fill="#000"/><rect x="1" y="1" width="30" height="30" fill="#fff"/><path d="M5 1h4v4h-4zM13 1h4v4h-4zM21 1h4v4h-4zM29 1h2v4h-2zM1 5h4v4h-4zM9 5h4v4h-4zM17 5h4v4h-4zM25 5h4v4h-4zM5 9h4v4h-4zM13 9h4v4h-4zM21 9h4v4h-4zM29 9h2v4h-2zM1 13h4v4h-4zM9 13h4v4h-4zM17 13h4v4h-4zM25 13h4v4h-4zM5 17h4v4h-4zM13 17h4v4h-4zM21 17h4v4h-4zM29 17h2v4h-2zM1 21h4v4h-4zM9 21h4v4h-4zM17 21h4v4h-4zM25 21h4v4h-4zM5 25h4v4h-4zM13 25h4v4h-4zM21 25h4v4h-4zM29 25h2v4h-2zM1 29h4v2h-4zM9 29h4v2h-4zM17 29h4v2h-4zM25 29h4v2h-4z" fill="#ccc"/><circle cx="16.400" cy="16.400" r="12.400" fill="#040404" shape-rendering="auto"/><rect x="26" y="14" width="1" height="1" fill="#c03040" opacity="0.2"/><rect x="25" y="21" width="1" height="1" fill="#3040c0" opacity="0.45"/><rect x="10" y="12" width="1" height="1" fill="#c060a0" opacity="0.6"/><rect x="10" y="9" width="1" height="1" fill="#a04080" opacity="0.45"/><rect x="10" y="15" width="1" height="1" fill="#3040c0" opacity="0.2"/><rect x="20" y="12" width="1" height="1" fill="#30a060" opacity="0.6"/><rect x="8" y="21" width="1" height="1" fill="#c060a0" opacity="0.3"/><rect x="16" y="18" width="1" height="1" fill="#30a060" opacity="0.3"/><rect x="21" y="22" width="1" height="1" fill="#a04080" opacity="0.3"/><rect x="23" y="16" width="1" height="1" fill="#806040" opacity="0.45"/><rect x="18" y="11" width="1" height="1" fill="#40c0a0" opacity="0.3"/><rect x="22" y="15" width="1" height="1" fill="#40c0a0" opacity="0.3"/><rect x="6" y="17" width="1" height="1" fill="#a04080" opacity="0.45"/><rect x="13" y="11" width="1" height="1" fill="#40c0a0" opacity="0.45"/><rect x="7" y="12" width="1" height="1" fill="#40c0a0" opacity="0.6"/><rect x="11" y="8" width="1" height="1" fill="#c060a0" opacity="0.45"/><rect x="17" y="10" width="1" height="1" fill="#3040c0" opacity="0.6"/><rect x="15" y="20" width="1" height="1" fill="#a04080" opacity="0.45"/><rect x="24" y="13" width="1" height="1" fill="#30b0c0" opacity="0.45"/><rect x="15" y="7" width="1" height="1" fill="#b0a060" opacity="0.2"/><rect x="24" y="19" width="1" height="1" fill="#3040c0" opacity="0.3"/><rect x="12" y="7" width="1" height="1" fill="#a04080" opacity="0.3"/><rect x="19" y="13" width="1" height="1" fill="#b0a060" opacity="0.2"/><rect x="9" y="20" width="1" height="1" fill="#c03040" opacity="0.2"/><rect x="14" y="19" width="1" height="1" fill="#c03040" opacity="0.2"/><rect x="18" y="18" width="1" height="1" fill="#c03040" opacity="0.2"/></svg></div><div class="nm">滤镜 &gt; 扭曲 &gt; 球面化 副本</div></div>
  <div class="eye" style="top:191px"></div>
  <div class="row" style="top:179px"><div class="s1"></div><div class="s2"></div><div class="th"><svg width="32" height="32" viewBox="0 0 32 32" shape-rendering="crispEdges"><rect width="32" height="32" fill="#000"/><rect x="1" y="1" width="30" height="30" fill="#fff"/><path d="M5 1h4v4h-4zM13 1h4v4h-4zM21 1h4v4h-4zM29 1h2v4h-2zM1 5h4v4h-4zM9 5h4v4h-4zM17 5h4v4h-4zM25 5h4v4h-4zM5 9h4v4h-4zM13 9h4v4h-4zM21 9h4v4h-4zM29 9h2v4h-2zM1 13h4v4h-4zM9 13h4v4h-4zM17 13h4v4h-4zM25 13h4v4h-4zM5 17h4v4h-4zM13 17h4v4h-4zM21 17h4v4h-4zM29 17h2v4h-2zM1 21h4v4h-4zM9 21h4v4h-4zM17 21h4v4h-4zM25 21h4v4h-4zM5 25h4v4h-4zM13 25h4v4h-4zM21 25h4v4h-4zM29 25h2v4h-2zM1 29h4v2h-4zM9 29h4v2h-4zM17 29h4v2h-4zM25 29h4v2h-4z" fill="#ccc"/><circle cx="16.400" cy="16.400" r="12.400" fill="#040404" shape-rendering="auto"/><rect x="17" y="24" width="1" height="1" fill="#30a060" opacity="0.6"/><rect x="15" y="15" width="1" height="1" fill="#c03040" opacity="0.6"/><rect x="16" y="21" width="1" height="1" fill="#40c0a0" opacity="0.6"/><rect x="9" y="22" width="1" height="1" fill="#b0a060" opacity="0.3"/><rect x="21" y="11" width="1" height="1" fill="#c03040" opacity="0.2"/><rect x="22" y="25" width="1" height="1" fill="#c03040" opacity="0.45"/><rect x="18" y="7" width="1" height="1" fill="#3040c0" opacity="0.6"/><rect x="8" y="11" width="1" height="1" fill="#806040" opacity="0.6"/><rect x="9" y="22" width="1" height="1" fill="#40c0a0" opacity="0.3"/><rect x="18" y="15" width="1" height="1" fill="#c060a0" opacity="0.6"/><rect x="19" y="26" width="1" height="1" fill="#806040" opacity="0.45"/><rect x="8" y="21" width="1" height="1" fill="#30a060" opacity="0.6"/><rect x="8" y="11" width="1" height="1" fill="#c03040" opacity="0.45"/><rect x="25" y="16" width="1" height="1" fill="#c060a0" opacity="0.45"/><rect x="26" y="14" width="1" height="1" fill="#30b0c0" opacity="0.3"/><rect x="9" y="9" width="1" height="1" fill="#3040c0" opacity="0.45"/><rect x="21" y="21" width="1" height="1" fill="#40c0a0" opacity="0.2"/><rect x="15" y="18" width="1" height="1" fill="#c060a0" opacity="0.2"/><rect x="14" y="25" width="1" height="1" fill="#30b0c0" opacity="0.2"/><rect x="9" y="11" width="1" height="1" fill="#806040" opacity="0.45"/><rect x="7" y="13" width="1" height="1" fill="#3040c0" opacity="0.3"/><rect x="22" y="16" width="1" height="1" fill="#30b0c0" opacity="0.2"/><rect x="15" y="16" width="1" height="1" fill="#b0a060" opacity="0.6"/><rect x="15" y="21" width="1" height="1" fill="#c03040" opacity="0.45"/><rect x="12" y="26" width="1" height="1" fill="#806040" opacity="0.6"/><rect x="10" y="18" width="1" height="1" fill="#a04080" opacity="0.2"/></svg></div><div class="nm">滤镜 &gt; 扭曲 &gt; 球面化</div></div>
  <div class="eye" style="top:230px"></div>
  <div class="row" style="top:218px"><div class="s1"></div><div class="s2"></div><div class="th"><svg width="32" height="32" viewBox="0 0 32 32" shape-rendering="crispEdges"><rect width="32" height="32" fill="#000"/><rect x="1" y="1" width="30" height="30" fill="#13146a"/></svg></div><div class="nm">图层 2</div></div>
  <div class="eye" style="top:269px"><svg width="13" height="13" viewBox="0 0 13 13" style="display:block"><path d="M1 6.800C2.600 4 4.600 3 6.600 3s4 1 5.600 3.600C10.800 9 8.800 10 6.600 10S2.400 9.200 1 6.800z" fill="#c8c8c8" stroke="#1a1a1a" stroke-width="1.100"/><path d="M1.200 5.200C3 3 5 2.200 6.800 2.200s3.600.600 5 2.400" fill="none" stroke="#2a2a2a" stroke-width="1"/><ellipse cx="6.600" cy="6.500" rx="3.100" ry="2.900" fill="#080808"/><circle cx="5.400" cy="5.500" r=".8" fill="#fff"/></svg></div>
  <div class="row sel" style="top:257px"><div class="s1"></div><div class="s2"></div><div class="bg"></div><svg class="abs" style="left:17px;top:2px" width="36" height="36" viewBox="0 0 36 36" shape-rendering="crispEdges"><path d="M0.500 12V.5H12M24 .5h11.500V12M35.500 24v11.500H24M12 35.500H.5V24" fill="none" stroke="#000" stroke-width="1"/><rect x="1.500" y="1.500" width="33" height="33" fill="none" stroke="#fff" stroke-width="1"/></svg><div class="th"><svg width="32" height="32" viewBox="0 0 32 32" shape-rendering="crispEdges"><rect width="32" height="32" fill="#000"/><rect x="3" y="3" width="1" height="1" fill="#285050" opacity="0.3"/><rect x="6" y="3" width="1" height="1" fill="#603838" opacity="0.15"/><rect x="9" y="3" width="1" height="1" fill="#305040" opacity="0.15"/><rect x="12" y="3" width="1" height="1" fill="#285050" opacity="0.15"/><rect x="15" y="3" width="1" height="1" fill="#504828" opacity="0.15"/><rect x="18" y="3" width="1" height="1" fill="#305040" opacity="0.7"/><rect x="21" y="3" width="1" height="1" fill="#603838" opacity="0.15"/><rect x="24" y="3" width="1" height="1" fill="#504828" opacity="0.15"/><rect x="27" y="3" width="1" height="1" fill="#603838" opacity="0.15"/><rect x="4" y="6" width="1" height="1" fill="#305040" opacity="0.3"/><rect x="7" y="6" width="1" height="1" fill="#503030" opacity="0.7"/><rect x="10" y="6" width="1" height="1" fill="#503030" opacity="0.3"/><rect x="13" y="6" width="1" height="1" fill="#503030" opacity="0.3"/><rect x="16" y="6" width="1" height="1" fill="#402848" opacity="0.7"/><rect x="19" y="6" width="1" height="1" fill="#303058" opacity="0.15"/><rect x="22" y="6" width="1" height="1" fill="#402848" opacity="0.3"/><rect x="25" y="6" width="1" height="1" fill="#305040" opacity="0.3"/><rect x="28" y="6" width="1" height="1" fill="#285050" opacity="0.15"/><rect x="3" y="9" width="1" height="1" fill="#305040" opacity="0.15"/><rect x="6" y="9" width="1" height="1" fill="#504828" opacity="0.7"/><rect x="9" y="9" width="1" height="1" fill="#603838" opacity="0.5"/><rect x="12" y="9" width="1" height="1" fill="#386038" opacity="0.7"/><rect x="15" y="9" width="1" height="1" fill="#285050" opacity="0.5"/><rect x="18" y="9" width="1" height="1" fill="#504828" opacity="0.3"/><rect x="21" y="9" width="1" height="1" fill="#504828" opacity="0.15"/><rect x="24" y="9" width="1" height="1" fill="#402848" opacity="0.7"/><rect x="27" y="9" width="1" height="1" fill="#285050" opacity="0.7"/><rect x="4" y="11" width="1" height="1" fill="#402848" opacity="0.15"/><rect x="7" y="11" width="1" height="1" fill="#305040" opacity="0.7"/><rect x="10" y="11" width="1" height="1" fill="#303058" opacity="0.5"/><rect x="13" y="11" width="1" height="1" fill="#303058" opacity="0.7"/><rect x="16" y="11" width="1" height="1" fill="#603838" opacity="0.15"/><rect x="19" y="11" width="1" height="1" fill="#305040" opacity="0.5"/><rect x="22" y="11" width="1" height="1" fill="#285050" opacity="0.5"/><rect x="25" y="11" width="1" height="1" fill="#386038" opacity="0.7"/><rect x="28" y="11" width="1" height="1" fill="#305040" opacity="0.15"/><rect x="3" y="14" width="1" height="1" fill="#402848" opacity="0.7"/><rect x="6" y="14" width="1" height="1" fill="#305040" opacity="0.15"/><rect x="9" y="14" width="1" height="1" fill="#402848" opacity="0.7"/><rect x="12" y="14" width="1" height="1" fill="#402848" opacity="0.7"/><rect x="15" y="14" width="1" height="1" fill="#285050" opacity="0.15"/><rect x="18" y="14" width="1" height="1" fill="#386038" opacity="0.5"/><rect x="21" y="14" width="1" height="1" fill="#303058" opacity="0.15"/><rect x="24" y="14" width="1" height="1" fill="#386038" opacity="0.15"/><rect x="27" y="14" width="1" height="1" fill="#504828" opacity="0.5"/><rect x="4" y="17" width="1" height="1" fill="#303058" opacity="0.3"/><rect x="7" y="17" width="1" height="1" fill="#603838" opacity="0.7"/><rect x="10" y="17" width="1" height="1" fill="#386038" opacity="0.15"/><rect x="13" y="17" width="1" height="1" fill="#303058" opacity="0.7"/><rect x="16" y="17" width="1" height="1" fill="#603838" opacity="0.5"/><rect x="19" y="17" width="1" height="1" fill="#303058" opacity="0.7"/><rect x="22" y="17" width="1" height="1" fill="#402848" opacity="0.7"/><rect x="25" y="17" width="1" height="1" fill="#285050" opacity="0.7"/><rect x="28" y="17" width="1" height="1" fill="#504828" opacity="0.3"/><rect x="3" y="19" width="1" height="1" fill="#305040" opacity="0.3"/><rect x="6" y="19" width="1" height="1" fill="#303058" opacity="0.3"/><rect x="9" y="19" width="1" height="1" fill="#504828" opacity="0.15"/><rect x="12" y="19" width="1" height="1" fill="#386038" opacity="0.3"/><rect x="15" y="19" width="1" height="1" fill="#402848" opacity="0.5"/><rect x="18" y="19" width="1" height="1" fill="#503030" opacity="0.3"/><rect x="21" y="19" width="1" height="1" fill="#603838" opacity="0.5"/><rect x="24" y="19" width="1" height="1" fill="#285050" opacity="0.3"/><rect x="27" y="19" width="1" height="1" fill="#503030" opacity="0.7"/><rect x="4" y="22" width="1" height="1" fill="#603838" opacity="0.7"/><rect x="7" y="22" width="1" height="1" fill="#603838" opacity="0.7"/><rect x="10" y="22" width="1" height="1" fill="#305040" opacity="0.7"/><rect x="13" y="22" width="1" height="1" fill="#603838" opacity="0.15"/><rect x="16" y="22" width="1" height="1" fill="#504828" opacity="0.15"/><rect x="19" y="22" width="1" height="1" fill="#504828" opacity="0.7"/><rect x="22" y="22" width="1" height="1" fill="#303058" opacity="0.15"/><rect x="25" y="22" width="1" height="1" fill="#285050" opacity="0.15"/><rect x="28" y="22" width="1" height="1" fill="#305040" opacity="0.15"/><rect x="3" y="25" width="1" height="1" fill="#303058" opacity="0.15"/><rect x="6" y="25" width="1" height="1" fill="#285050" opacity="0.15"/><rect x="9" y="25" width="1" height="1" fill="#305040" opacity="0.3"/><rect x="12" y="25" width="1" height="1" fill="#603838" opacity="0.3"/><rect x="15" y="25" width="1" height="1" fill="#402848" opacity="0.5"/><rect x="18" y="25" width="1" height="1" fill="#285050" opacity="0.7"/><rect x="21" y="25" width="1" height="1" fill="#305040" opacity="0.15"/><rect x="24" y="25" width="1" height="1" fill="#386038" opacity="0.7"/><rect x="27" y="25" width="1" height="1" fill="#386038" opacity="0.7"/><rect x="4" y="27" width="1" height="1" fill="#402848" opacity="0.15"/><rect x="7" y="27" width="1" height="1" fill="#303058" opacity="0.15"/><rect x="10" y="27" width="1" height="1" fill="#285050" opacity="0.5"/><rect x="13" y="27" width="1" height="1" fill="#386038" opacity="0.3"/><rect x="16" y="27" width="1" height="1" fill="#503030" opacity="0.3"/><rect x="19" y="27" width="1" height="1" fill="#285050" opacity="0.3"/><rect x="22" y="27" width="1" height="1" fill="#503030" opacity="0.5"/><rect x="25" y="27" width="1" height="1" fill="#305040" opacity="0.5"/><rect x="28" y="27" width="1" height="1" fill="#285050" opacity="0.3"/></svg></div><div class="nm">Ctrl + Shift + Alt + E</div></div>
  <div class="eye" style="top:308px"></div>
  <div class="row" style="top:296px"><div class="s1"></div><div class="s2"></div><div class="th"><svg width="32" height="32" viewBox="0 0 32 32" shape-rendering="crispEdges"><rect width="32" height="32" fill="#000"/><rect x="2" y="4" width="28" height="1" fill="#707030" opacity=".5"/><rect x="2" y="9" width="28" height="1" fill="#605028" opacity=".5"/><rect x="2" y="11" width="28" height="1" fill="#405050" opacity=".5"/><rect x="2" y="16" width="28" height="1" fill="#504838" opacity=".5"/><rect x="2" y="23" width="28" height="1" fill="#382860" opacity=".5"/><rect x="2" y="28" width="28" height="1" fill="#5030a0" opacity=".5"/><rect x="4" y="2" width="1" height="28" fill="#20a070" opacity=".72"/><rect x="9" y="2" width="1" height="10" fill="#80b020" opacity=".72"/><rect x="9" y="12" width="1" height="10" fill="#2040c0" opacity=".72"/><rect x="9" y="22" width="1" height="4" fill="#a0c040" opacity=".72"/><rect x="9" y="26" width="1" height="4" fill="#2030c0" opacity=".72"/><rect x="11" y="2" width="1" height="8" fill="#2030d0" opacity=".72"/><rect x="11" y="10" width="1" height="4" fill="#c08030" opacity=".72"/><rect x="11" y="14" width="1" height="8" fill="#2030c0" opacity=".72"/><rect x="11" y="22" width="1" height="8" fill="#80a020" opacity=".72"/><rect x="16" y="2" width="1" height="2" fill="#e07020" opacity=".72"/><rect x="16" y="4" width="1" height="4" fill="#f0e0d0" opacity=".72"/><rect x="16" y="8" width="1" height="5" fill="#c02020" opacity=".72"/><rect x="16" y="13" width="1" height="6" fill="#20b0c0" opacity=".72"/><rect x="16" y="19" width="1" height="4" fill="#c02030" opacity=".72"/><rect x="16" y="23" width="1" height="3" fill="#d0d040" opacity=".72"/><rect x="16" y="26" width="1" height="4" fill="#208040" opacity=".72"/><rect x="23" y="2" width="1" height="7" fill="#209030" opacity=".72"/><rect x="23" y="9" width="1" height="5" fill="#30c060" opacity=".72"/><rect x="23" y="14" width="1" height="12" fill="#208030" opacity=".72"/><rect x="23" y="26" width="1" height="4" fill="#c06020" opacity=".72"/><rect x="28" y="2" width="1" height="7" fill="#c02020" opacity=".72"/><rect x="28" y="9" width="1" height="15" fill="#e07010" opacity=".72"/><rect x="28" y="24" width="1" height="6" fill="#c02030" opacity=".72"/><rect x="4" y="4" width="3" height="1" fill="#d0d060" opacity=".7"/><rect x="12" y="9" width="3" height="1" fill="#a0a0c0" opacity=".7"/><rect x="20" y="9" width="4" height="1" fill="#c0c060" opacity=".7"/><rect x="13" y="11" width="6" height="1" fill="#9090a0" opacity=".7"/><rect x="10" y="23" width="3" height="1" fill="#c0e060" opacity=".7"/><rect x="14" y="23" width="3" height="1" fill="#e0e080" opacity=".7"/><rect x="2" y="28" width="6" height="1" fill="#8060d0" opacity=".7"/><rect x="16" y="4" width="1" height="1" fill="#f0e0d0" opacity=".7"/><rect x="17" y="16" width="6" height="1" fill="#707060" opacity=".7"/><rect x="24" y="23" width="5" height="1" fill="#806050" opacity=".7"/><rect x="25" y="28" width="5" height="1" fill="#903060" opacity=".7"/></svg></div><div class="nm">复制一个图层，翻转一下</div></div>
  <div class="eye" style="top:347px"></div>
  <div class="row" style="top:335px"><div class="s1"></div><div class="s2"></div><div class="th"><svg width="32" height="32" viewBox="0 0 32 32" shape-rendering="crispEdges"><rect width="32" height="32" fill="#000"/><g opacity=".62"><rect x="2" y="3" width="28" height="1" fill="#40a040" opacity=".32"/><rect x="2" y="5" width="28" height="1" fill="#3040c0" opacity=".32"/><rect x="2" y="8" width="28" height="1" fill="#40a040" opacity=".32"/><rect x="2" y="10" width="28" height="1" fill="#40a040" opacity=".32"/><rect x="2" y="13" width="28" height="1" fill="#3040c0" opacity=".32"/><rect x="2" y="15" width="28" height="1" fill="#a03060" opacity=".32"/><rect x="2" y="18" width="28" height="1" fill="#806030" opacity=".32"/><rect x="2" y="20" width="28" height="1" fill="#308040" opacity=".32"/><rect x="2" y="23" width="28" height="1" fill="#3040c0" opacity=".32"/><rect x="2" y="25" width="28" height="1" fill="#40a040" opacity=".32"/><rect x="2" y="28" width="28" height="1" fill="#307050" opacity=".32"/><rect x="2" y="29" width="28" height="1" fill="#a03060" opacity=".32"/><rect x="3" y="2" width="1" height="28" fill="#c03020" opacity=".6"/><rect x="3" y="7" width="1" height="2" fill="#40a040"/><rect x="3" y="11" width="1" height="3" fill="#804020"/><rect x="3" y="19" width="1" height="2" fill="#a03060"/><rect x="5" y="2" width="1" height="28" fill="#804020" opacity=".6"/><rect x="5" y="14" width="1" height="5" fill="#307050"/><rect x="5" y="25" width="1" height="5" fill="#307050"/><rect x="5" y="7" width="1" height="6" fill="#c03020"/><rect x="8" y="2" width="1" height="28" fill="#308040" opacity=".6"/><rect x="8" y="18" width="1" height="2" fill="#c03020"/><rect x="8" y="3" width="1" height="3" fill="#806030"/><rect x="8" y="21" width="1" height="2" fill="#40a040"/><rect x="10" y="2" width="1" height="28" fill="#806030" opacity=".6"/><rect x="10" y="12" width="1" height="5" fill="#a03060"/><rect x="10" y="8" width="1" height="6" fill="#806030"/><rect x="10" y="22" width="1" height="4" fill="#40a040"/><rect x="12" y="2" width="1" height="28" fill="#a09030" opacity=".6"/><rect x="12" y="2" width="1" height="2" fill="#40a040"/><rect x="12" y="22" width="1" height="4" fill="#c06030"/><rect x="12" y="19" width="1" height="2" fill="#5040a0"/><rect x="15" y="2" width="1" height="28" fill="#3080a0" opacity=".6"/><rect x="15" y="10" width="1" height="4" fill="#806030"/><rect x="15" y="18" width="1" height="4" fill="#c03020"/><rect x="15" y="4" width="1" height="6" fill="#804020"/><rect x="17" y="2" width="1" height="28" fill="#c06030" opacity=".6"/><rect x="17" y="14" width="1" height="2" fill="#a09030"/><rect x="17" y="14" width="1" height="2" fill="#c03020"/><rect x="17" y="23" width="1" height="2" fill="#806030"/><rect x="20" y="2" width="1" height="28" fill="#40a040" opacity=".6"/><rect x="20" y="8" width="1" height="2" fill="#40a040"/><rect x="20" y="14" width="1" height="5" fill="#c06030"/><rect x="20" y="4" width="1" height="6" fill="#307050"/><rect x="22" y="2" width="1" height="28" fill="#3040c0" opacity=".6"/><rect x="22" y="8" width="1" height="4" fill="#3080a0"/><rect x="22" y="4" width="1" height="4" fill="#3080a0"/><rect x="22" y="2" width="1" height="5" fill="#804020"/><rect x="24" y="2" width="1" height="28" fill="#a03060" opacity=".6"/><rect x="24" y="6" width="1" height="3" fill="#5040a0"/><rect x="24" y="5" width="1" height="2" fill="#c03020"/><rect x="24" y="16" width="1" height="5" fill="#308040"/><rect x="27" y="2" width="1" height="28" fill="#307050" opacity=".6"/><rect x="27" y="23" width="1" height="6" fill="#806030"/><rect x="27" y="16" width="1" height="6" fill="#806030"/><rect x="27" y="25" width="1" height="3" fill="#c06030"/><rect x="29" y="2" width="1" height="28" fill="#5040a0" opacity=".6"/><rect x="29" y="22" width="1" height="5" fill="#804020"/><rect x="29" y="14" width="1" height="5" fill="#806030"/><rect x="29" y="2" width="1" height="4" fill="#a03060"/><rect x="12" y="5" width="4" height="1" fill="#c0b040"/><rect x="12" y="5" width="1" height="6" fill="#a0a040"/><rect x="15" y="7" width="1" height="4" fill="#d0d0a0"/><rect x="15" y="12" width="1" height="8" fill="#30c0c0"/><rect x="16" y="8" width="6" height="1" fill="#c0c0a0"/><rect x="8" y="17" width="1" height="8" fill="#30c060"/><rect x="3" y="13" width="1" height="8" fill="#e06040"/><rect x="24" y="27" width="4" height="1" fill="#d0d060"/><rect x="24" y="27" width="1" height="3" fill="#c0c050"/><rect x="9" y="22" width="5" height="1" fill="#c0a050"/><rect x="22" y="9" width="1" height="3" fill="#a0d040"/></g></svg></div><div class="nm">滤镜-风格化-照亮边缘</div></div>
  <div class="eye" style="top:386px"></div>
  <div class="row" style="top:374px"><div class="s1"></div><div class="s2"></div><div class="th"><svg width="32" height="32" viewBox="0 0 32 32" shape-rendering="crispEdges"><rect width="32" height="32" fill="#000"/><rect x="1" y="1" width="2" height="3" fill="#5c0529"/><rect x="1" y="4" width="2" height="2" fill="#60052b"/><rect x="1" y="6" width="2" height="3" fill="#580226"/><rect x="1" y="9" width="2" height="2" fill="#4d0322"/><rect x="1" y="11" width="2" height="4" fill="#540828"/><rect x="1" y="15" width="2" height="2" fill="#5b0d2e"/><rect x="1" y="17" width="2" height="3" fill="#63062d"/><rect x="1" y="20" width="2" height="3" fill="#5d1432"/><rect x="1" y="23" width="2" height="4" fill="#430f25"/><rect x="1" y="27" width="2" height="2" fill="#460d25"/><rect x="1" y="29" width="2" height="2" fill="#611032"/><rect x="3" y="1" width="3" height="3" fill="#a81630"/><rect x="3" y="4" width="3" height="3" fill="#8b0a21"/><rect x="3" y="7" width="3" height="3" fill="#ca1133"/><rect x="3" y="10" width="3" height="3" fill="#7e172a"/><rect x="3" y="13" width="3" height="3" fill="#921e33"/><rect x="3" y="16" width="3" height="2" fill="#ac1531"/><rect x="3" y="18" width="3" height="2" fill="#950f27"/><rect x="3" y="20" width="3" height="4" fill="#b42b43"/><rect x="3" y="24" width="3" height="4" fill="#b53048"/><rect x="3" y="28" width="3" height="2" fill="#c92845"/><rect x="3" y="30" width="3" height="1" fill="#7e0d22"/><rect x="6" y="1" width="2" height="3" fill="#b12c1a"/><rect x="6" y="4" width="2" height="4" fill="#933629"/><rect x="6" y="8" width="2" height="3" fill="#993729"/><rect x="6" y="11" width="2" height="4" fill="#ae3b2b"/><rect x="6" y="15" width="2" height="3" fill="#d6513f"/><rect x="6" y="18" width="2" height="3" fill="#dd5745"/><rect x="6" y="21" width="2" height="2" fill="#a13223"/><rect x="6" y="23" width="2" height="3" fill="#e34d39"/><rect x="6" y="26" width="2" height="2" fill="#ab3b2c"/><rect x="6" y="28" width="2" height="3" fill="#d83e2a"/><rect x="8" y="1" width="3" height="3" fill="#d28146"/><rect x="8" y="4" width="3" height="2" fill="#874c21"/><rect x="8" y="6" width="3" height="4" fill="#83481d"/><rect x="8" y="10" width="3" height="3" fill="#c47236"/><rect x="8" y="13" width="3" height="4" fill="#8c4919"/><rect x="8" y="17" width="3" height="2" fill="#c2733a"/><rect x="8" y="19" width="3" height="3" fill="#8b4c1f"/><rect x="8" y="22" width="3" height="3" fill="#b46226"/><rect x="8" y="25" width="3" height="2" fill="#8e5429"/><rect x="8" y="27" width="3" height="2" fill="#c6763c"/><rect x="8" y="29" width="3" height="2" fill="#cc7332"/><rect x="11" y="1" width="2" height="3" fill="#cb962e"/><rect x="11" y="4" width="2" height="4" fill="#b4862e"/><rect x="11" y="8" width="2" height="3" fill="#946d23"/><rect x="11" y="11" width="2" height="3" fill="#855f14"/><rect x="11" y="14" width="2" height="3" fill="#af8026"/><rect x="11" y="17" width="2" height="3" fill="#8b661e"/><rect x="11" y="20" width="2" height="3" fill="#825c14"/><rect x="11" y="23" width="2" height="3" fill="#b48221"/><rect x="11" y="26" width="2" height="3" fill="#9a6f1b"/><rect x="11" y="29" width="2" height="2" fill="#c09033"/><rect x="13" y="1" width="2" height="3" fill="#d8bf40"/><rect x="13" y="4" width="2" height="3" fill="#b7a542"/><rect x="13" y="7" width="2" height="3" fill="#a19032"/><rect x="13" y="10" width="2" height="3" fill="#ccb331"/><rect x="13" y="13" width="2" height="3" fill="#a38f27"/><rect x="13" y="16" width="2" height="4" fill="#a48f21"/><rect x="13" y="20" width="2" height="4" fill="#d9bd27"/><rect x="13" y="24" width="2" height="3" fill="#b3a03b"/><rect x="13" y="27" width="2" height="3" fill="#d6bd3a"/><rect x="13" y="30" width="2" height="1" fill="#c3ab2c"/><rect x="15" y="1" width="3" height="3" fill="#769534"/><rect x="15" y="4" width="3" height="4" fill="#677f34"/><rect x="15" y="8" width="3" height="3" fill="#829c4c"/><rect x="15" y="11" width="3" height="3" fill="#76933a"/><rect x="15" y="14" width="3" height="3" fill="#627a2f"/><rect x="15" y="17" width="3" height="2" fill="#8aaf3c"/><rect x="15" y="19" width="3" height="3" fill="#5c6e34"/><rect x="15" y="22" width="3" height="3" fill="#8dad48"/><rect x="15" y="25" width="3" height="2" fill="#6f873b"/><rect x="15" y="27" width="3" height="2" fill="#799343"/><rect x="15" y="29" width="3" height="2" fill="#576b2d"/><rect x="18" y="1" width="2" height="3" fill="#2aa697"/><rect x="18" y="4" width="2" height="3" fill="#35ad9f"/><rect x="18" y="7" width="2" height="3" fill="#237168"/><rect x="18" y="10" width="2" height="3" fill="#3dac9f"/><rect x="18" y="13" width="2" height="3" fill="#36a396"/><rect x="18" y="16" width="2" height="3" fill="#348b80"/><rect x="18" y="19" width="2" height="4" fill="#229184"/><rect x="18" y="23" width="2" height="3" fill="#339589"/><rect x="18" y="26" width="2" height="2" fill="#2e857a"/><rect x="18" y="28" width="2" height="3" fill="#208175"/><rect x="20" y="1" width="3" height="4" fill="#157daa"/><rect x="20" y="5" width="3" height="4" fill="#13759e"/><rect x="20" y="9" width="3" height="4" fill="#187ca6"/><rect x="20" y="13" width="3" height="3" fill="#3190b9"/><rect x="20" y="16" width="3" height="3" fill="#2988b0"/><rect x="20" y="19" width="3" height="3" fill="#37a7d7"/><rect x="20" y="22" width="3" height="3" fill="#2e7492"/><rect x="20" y="25" width="3" height="4" fill="#307b9b"/><rect x="20" y="29" width="3" height="2" fill="#41a3cd"/><rect x="23" y="1" width="3" height="3" fill="#2a579a"/><rect x="23" y="4" width="3" height="2" fill="#305b9b"/><rect x="23" y="6" width="3" height="3" fill="#3c72c3"/><rect x="23" y="9" width="3" height="4" fill="#3269ba"/><rect x="23" y="13" width="3" height="2" fill="#2d5187"/><rect x="23" y="15" width="3" height="3" fill="#3568b3"/><rect x="23" y="18" width="3" height="3" fill="#4678c4"/><rect x="23" y="21" width="3" height="3" fill="#2458a4"/><rect x="23" y="24" width="3" height="3" fill="#2b5089"/><rect x="23" y="27" width="3" height="4" fill="#4274c0"/><rect x="26" y="1" width="2" height="3" fill="#1d1b7e"/><rect x="26" y="4" width="2" height="4" fill="#2a28ac"/><rect x="26" y="8" width="2" height="4" fill="#2a27c1"/><rect x="26" y="12" width="2" height="4" fill="#221f9c"/><rect x="26" y="16" width="2" height="3" fill="#3936c5"/><rect x="26" y="19" width="2" height="2" fill="#373695"/><rect x="26" y="21" width="2" height="4" fill="#2b29ab"/><rect x="26" y="25" width="2" height="4" fill="#4542c6"/><rect x="26" y="29" width="2" height="2" fill="#2623b4"/><rect x="28" y="1" width="3" height="3" fill="#4f2c9c"/><rect x="28" y="4" width="3" height="2" fill="#412679"/><rect x="28" y="6" width="3" height="2" fill="#5429af"/><rect x="28" y="8" width="3" height="2" fill="#48278c"/><rect x="28" y="10" width="3" height="2" fill="#5a2cbe"/><rect x="28" y="12" width="3" height="2" fill="#442a7d"/><rect x="28" y="14" width="3" height="2" fill="#5c39a9"/><rect x="28" y="16" width="3" height="3" fill="#562fa8"/><rect x="28" y="19" width="3" height="3" fill="#532ea1"/><rect x="28" y="22" width="3" height="3" fill="#412779"/><rect x="28" y="25" width="3" height="2" fill="#4d24a5"/><rect x="28" y="27" width="3" height="3" fill="#3b1e78"/><rect x="28" y="30" width="3" height="1" fill="#633db5"/><rect x="1" y="1" width="30" height="2" fill="#000" opacity=".25"/><rect x="1" y="1" width="1" height="30" fill="#000" opacity=".45"/><rect x="2" y="1" width="1" height="30" fill="#000" opacity=".2"/><rect x="15" y="27" width="2" height="3" fill="#f0e070"/><rect x="26" y="27" width="2" height="3" fill="#9090e0"/></svg></div><div class="nm">滤镜-像素化-马赛克。</div></div>
  <div class="eye" style="top:425px"></div>
  <div class="row" style="top:413px"><div class="s1"></div><div class="s2"></div><div class="th"><svg width="32" height="32" viewBox="0 0 32 32" shape-rendering="crispEdges"><rect width="32" height="32" fill="#000"/><defs><linearGradient id="rb" x1="0" x2="1" y1="0" y2="0"><stop offset="0" stop-color="#200008"/><stop offset=".1" stop-color="#a00818"/><stop offset=".22" stop-color="#e01808"/><stop offset=".34" stop-color="#f07000"/><stop offset=".43" stop-color="#f0d800"/><stop offset=".52" stop-color="#30b818"/><stop offset=".6" stop-color="#08a8e0"/><stop offset=".72" stop-color="#1040e0"/><stop offset=".86" stop-color="#5010c0"/><stop offset="1" stop-color="#300060"/></linearGradient><linearGradient id="rbv" x1="0" x2="0" y1="0" y2="1"><stop offset="0" stop-color="#000" stop-opacity=".7"/><stop offset=".08" stop-color="#000" stop-opacity="0"/><stop offset=".3" stop-color="#000" stop-opacity=".15"/><stop offset="1" stop-color="#000" stop-opacity=".05"/></linearGradient></defs><rect x="1" y="1" width="30" height="30" fill="url(#rb)"/><rect x="1" y="1" width="30" height="30" fill="url(#rbv)"/><path d="M7 4L6.5 6L7.7 8L8.9 10L8.4 12L8.4 14L9.6 16L10.1 18L11.3 20L10.1 22L11.3 24L10.1 26L10.6 28L10.6 30" fill="none" stroke="#ffb0a0" stroke-width=".7" opacity="0.8" shape-rendering="auto"/><path d="M10 4L9.5 6L9.0 8L9.5 10L10.7 12L11.9 14L12.4 16L12.9 18L12.4 20L11.9 22L11.4 24L12.6 26L13.1 28L11.9 30" fill="none" stroke="#ffd0a0" stroke-width=".7" opacity="0.8" shape-rendering="auto"/><path d="M12 4L10.8 6L10.3 8L11.5 10L10.3 12L10.3 14L9.1 16L9.1 18L9.6 20L10.8 22L11.3 24L11.8 26L12.3 28L13.5 30" fill="none" stroke="#fff0a0" stroke-width=".7" opacity="0.6" shape-rendering="auto"/><path d="M14 4L13.5 6L13.5 8L12.3 10L11.1 12L10.6 14L11.1 16L10.6 18L10.6 20L11.1 22L11.1 24L11.6 26L12.8 28L13.3 30" fill="none" stroke="#ffffa0" stroke-width=".7" opacity="0.8" shape-rendering="auto"/><path d="M17 4L17.0 6L18.2 8L19.4 10L19.9 12L21.1 14L20.6 16L20.6 18L19.4 20L19.4 22L20.6 24L20.1 26L20.1 28L21.3 30" fill="none" stroke="#c0ffd0" stroke-width=".7" opacity="0.8" shape-rendering="auto"/><path d="M19 4L20.2 6L19.0 8L18.5 10L19.7 12L19.7 14L19.7 16L18.5 18L17.3 20L17.8 22L18.3 24L17.1 26L17.1 28L15.9 30" fill="none" stroke="#c0f0ff" stroke-width=".7" opacity="0.6" shape-rendering="auto"/><path d="M21 4L20.5 6L19.3 8L19.3 10L19.8 12L20.3 14L19.1 16L17.9 18L19.1 20L20.3 22L19.1 24L19.6 26L20.8 28L20.8 30" fill="none" stroke="#d0e0ff" stroke-width=".7" opacity="0.8" shape-rendering="auto"/><path d="M25 4L25.0 6L26.2 8L25.7 10L24.5 12L24.5 14L23.3 16L22.1 18L20.9 20L22.1 22L23.3 24L22.1 26L21.6 28L22.1 30" fill="none" stroke="#d0c0ff" stroke-width=".7" opacity="0.6" shape-rendering="auto"/><path d="M28 4L29.2 6L29.2 8L28.7 10L27.5 12L27.5 14L27.5 16L27.5 18L27.0 20L27.5 22L28.0 24L28.5 26L29.7 28L30.2 30" fill="none" stroke="#c0a0e0" stroke-width=".7" opacity="0.8" shape-rendering="auto"/><rect x="24" y="26" width="1" height="1" fill="#fff" opacity="0.8"/><rect x="8" y="24" width="1" height="1" fill="#fff" opacity="0.8"/><rect x="13" y="18" width="1" height="1" fill="#fff" opacity="0.8"/><rect x="28" y="27" width="1" height="1" fill="#fff" opacity="0.3"/><rect x="14" y="18" width="1" height="1" fill="#fff" opacity="0.5"/><rect x="21" y="14" width="1" height="1" fill="#fff" opacity="0.8"/><rect x="15" y="5" width="1" height="1" fill="#fff" opacity="0.5"/><rect x="23" y="15" width="1" height="1" fill="#fff" opacity="0.3"/><rect x="17" y="24" width="1" height="1" fill="#fff" opacity="0.8"/><rect x="25" y="9" width="1" height="1" fill="#fff" opacity="0.3"/><rect x="25" y="25" width="1" height="1" fill="#fff" opacity="0.5"/><rect x="19" y="16" width="1" height="1" fill="#fff" opacity="0.8"/><rect x="16" y="24" width="1" height="1" fill="#fff" opacity="0.8"/><rect x="13" y="28" width="1" height="1" fill="#fff" opacity="0.5"/><rect x="5" y="23" width="1" height="1" fill="#fff" opacity="0.3"/><rect x="26" y="5" width="1" height="1" fill="#fff" opacity="0.5"/><rect x="13" y="25" width="1" height="1" fill="#fff" opacity="0.5"/><rect x="14" y="23" width="1" height="1" fill="#fff" opacity="0.8"/><rect x="15" y="10" width="1" height="1" fill="#fff" opacity="0.5"/><rect x="10" y="15" width="1" height="1" fill="#fff" opacity="0.5"/><rect x="24" y="13" width="1" height="1" fill="#fff" opacity="0.5"/><rect x="17" y="8" width="1" height="1" fill="#fff" opacity="0.3"/><rect x="23" y="26" width="1" height="1" fill="#fff" opacity="0.8"/><rect x="9" y="14" width="1" height="1" fill="#fff" opacity="0.8"/><rect x="12" y="25" width="1" height="1" fill="#fff" opacity="0.5"/><rect x="12" y="15" width="1" height="1" fill="#fff" opacity="0.3"/><rect x="26" y="18" width="1" height="1" fill="#fff" opacity="0.8"/><rect x="27" y="8" width="1" height="1" fill="#fff" opacity="0.3"/><rect x="24" y="15" width="1" height="1" fill="#fff" opacity="0.5"/><rect x="26" y="12" width="1" height="1" fill="#fff" opacity="0.5"/><rect x="10" y="7" width="1" height="1" fill="#fff" opacity="0.5"/><rect x="28" y="25" width="1" height="1" fill="#fff" opacity="0.3"/><rect x="23" y="19" width="1" height="1" fill="#fff" opacity="0.5"/><rect x="12" y="30" width="1" height="1" fill="#fff" opacity="0.3"/><rect x="6" y="21" width="1" height="1" fill="#fff" opacity="0.3"/><rect x="15" y="30" width="1" height="1" fill="#fff" opacity="0.8"/><rect x="10" y="13" width="1" height="1" fill="#fff" opacity="0.5"/><rect x="25" y="7" width="1" height="1" fill="#fff" opacity="0.8"/><rect x="16" y="23" width="1" height="1" fill="#fff" opacity="0.3"/><rect x="18" y="14" width="1" height="1" fill="#fff" opacity="0.8"/><rect x="13" y="19" width="1" height="1" fill="#fff" opacity="0.5"/><rect x="25" y="18" width="1" height="1" fill="#fff" opacity="0.5"/><rect x="18" y="23" width="1" height="1" fill="#fff" opacity="0.5"/><rect x="6" y="18" width="1" height="1" fill="#fff" opacity="0.3"/><rect x="11" y="5" width="1" height="1" fill="#fff" opacity="0.5"/><rect x="24" y="21" width="1" height="1" fill="#fff" opacity="0.5"/></svg></div><div class="nm">图层 1</div></div>
 </div>
 <div id="sb">
  <div class="arr" style="top:7px;border-bottom:4px solid #222;"></div>
  <div id="thumb"><div class="grip" style="top:172px"></div><div class="grip" style="top:175px"></div><div class="grip" style="top:178px"></div></div>
  <div class="arr" style="top:426px;border-top:4px solid #333;"></div>
 </div>
 <div id="tb"><svg width="261" height="16" viewBox="0 0 261 16"><g fill="none" stroke="#8c8c8c" stroke-width="1.100"><rect x="59.500" y="3.500" width="9" height="6" rx="3" fill="#f6f6f6"/><rect x="68.500" y="3.500" width="9" height="6" rx="3" fill="#f6f6f6"/></g><path d="M64 6.500h9" stroke="#777" stroke-width="1.600"/><text x="89.500" y="10.500" font-family="Liberation Serif,serif" font-style="italic" font-weight="bold" font-size="12.500" fill="#333">fx</text><path d="M103 11h3.600l-1.800 2z" fill="#222"/><rect x="116.500" y="1.500" width="13" height="11" fill="#9a9a9a" stroke="#555" stroke-width="1"/><path d="M116.500 13h13.500v-11.500" fill="none" stroke="#222" stroke-width="1"/><circle cx="123.200" cy="7.200" r="3.300" fill="#fff"/><circle cx="150.200" cy="7.200" r="5.200" fill="#f4f4f4" stroke="#444" stroke-width="1"/><path d="M146.500 10.900A5.200 5.200 0 0 1 153.900 3.500z" fill="#222"/><path d="M157 11h4l-2 2z" fill="#222"/><path d="M171.500 4q0-1 1-1h2.600l1 1.200h5q1 0 1 1v5.300h-10.600z" fill="#f0f0f0" stroke="#999" stroke-width=".8"/><path d="M171.400 11h11.200v-5" fill="none" stroke="#333" stroke-width="1.100"/><rect x="199.500" y="2.500" width="8.500" height="8.500" fill="#f6f6f6" stroke="#aaa" stroke-width=".8"/><path d="M199.500 11.500h9v-9" fill="none" stroke="#1c1c1c" stroke-width="1.100"/><path d="M200 7.500h4v4" fill="none" stroke="#333" stroke-width="1"/><path d="M201 9l2 2v-2z" fill="#444"/><path d="M228 5h7.400l-.5 6q-3.200 2-6.400 0z" fill="#f2f2f2" stroke="#333" stroke-width=".9"/><ellipse cx="231.700" cy="4.600" rx="4.500" ry="1.500" fill="#222"/><path d="M230.200 3q1.500-2 3 0" fill="none" stroke="#222" stroke-width="1.100"/><path d="M230.600 7v4.500M232.800 7v4.500M234.600 6.500v4.500" stroke="#222" stroke-width=".9"/><path d="M257 13h1v1h-1zM255 13h1v1h-1zM253 13h1v1h-1zM251 13h1v1h-1zM249 13h1v1h-1zM257 11h1v1h-1zM255 11h1v1h-1zM253 11h1v1h-1zM251 11h1v1h-1zM257 9h1v1h-1zM255 9h1v1h-1zM253 9h1v1h-1zM257 7h1v1h-1zM255 7h1v1h-1zM257 5h1v1h-1z" fill="#8c8c8c" shape-rendering="crispEdges"/></svg></div>
 <div id="pbottom2"></div><div id="pright2"></div><div id="pbottom"></div>
</div>

</body></html>
